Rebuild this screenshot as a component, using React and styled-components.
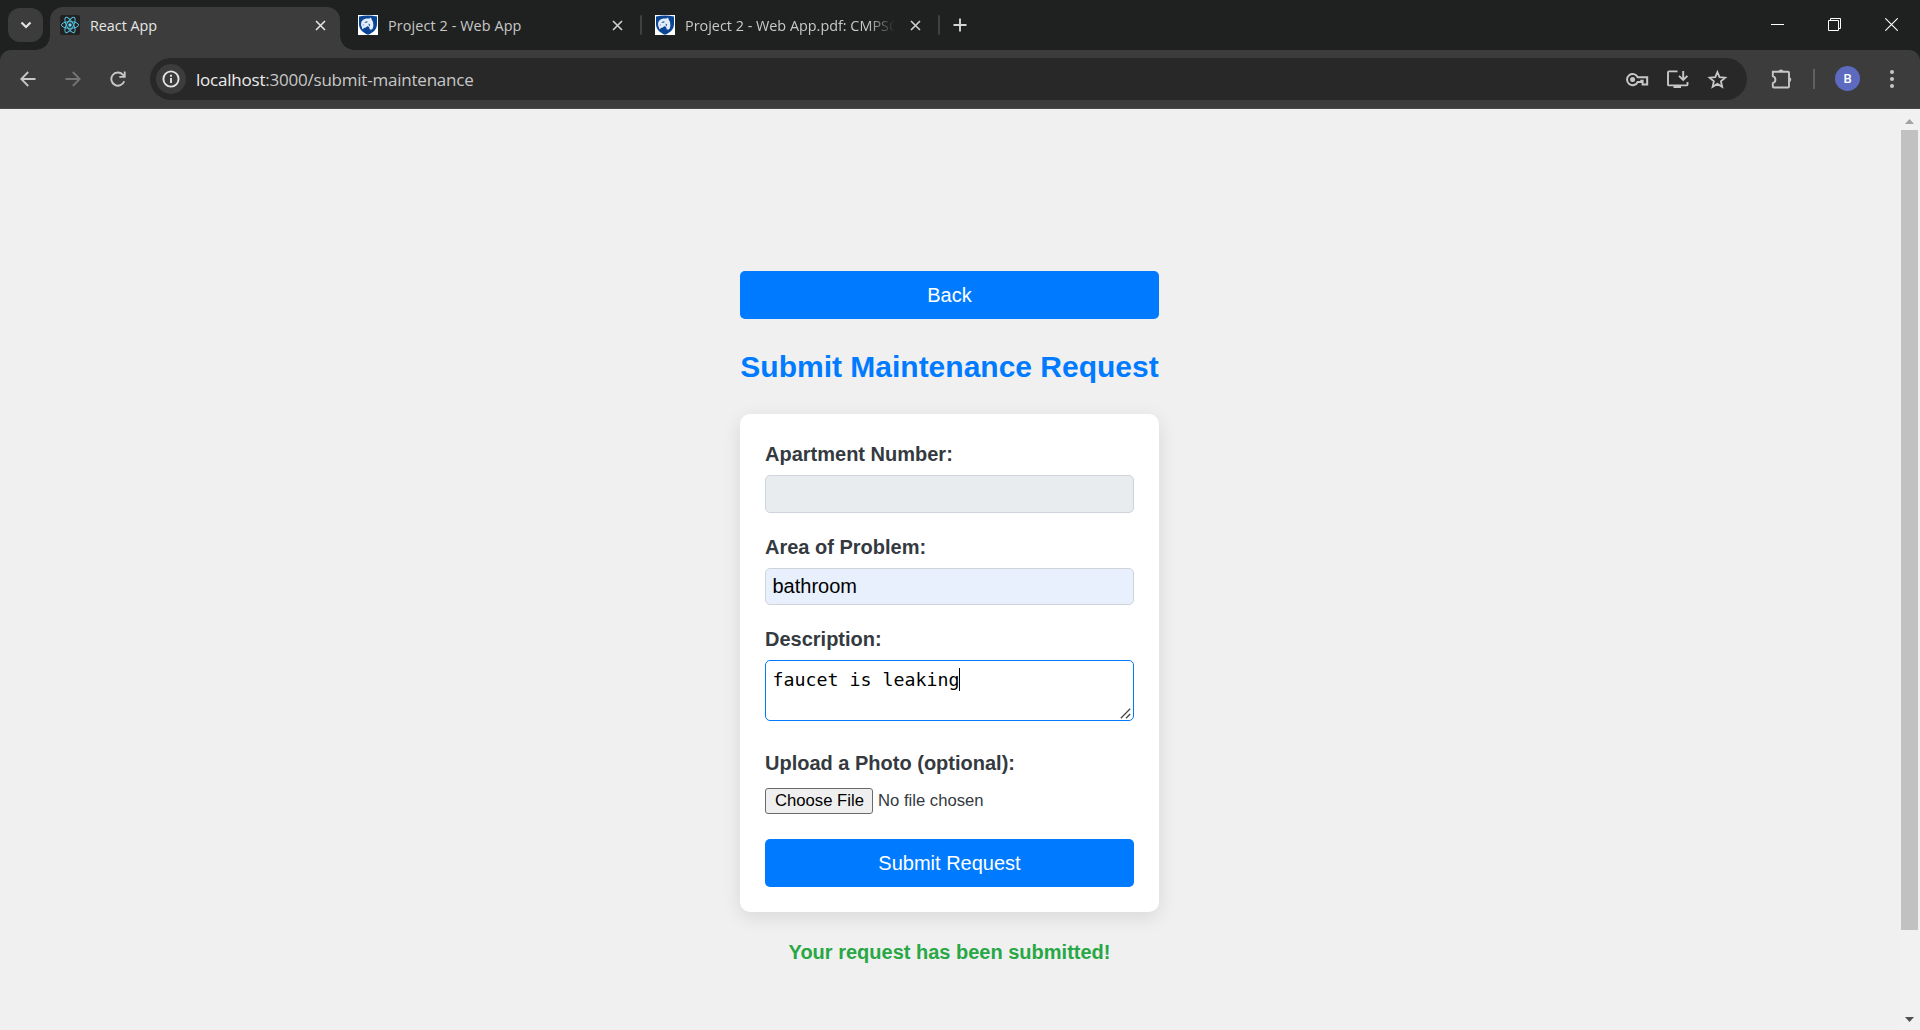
import React from "react";
import styled, { createGlobalStyle } from "styled-components";

const GlobalStyle = createGlobalStyle`
  * { box-sizing: border-box; }
  html, body { margin: 0; height: 100%; overflow: hidden; background: #f0f0f0; }
  #root { height: 100%; }
  button, input { margin: 0; }
`;

const ui = `"Open Sans", "Noto Sans", sans-serif`;
const arial = `"Liberation Sans", Arial, sans-serif`;

const Window = styled.div`
  display: flex;
  flex-direction: column;
  height: 100vh;
  font-family: ${arial};
`;

const TabStrip = styled.div`
  display: flex;
  align-items: flex-start;
  height: 50px;
  padding-left: 8px;
  background: #1f2120;
  flex: none;
`;

const TabSearch = styled.button`
  display: grid;
  place-items: center;
  width: 35px;
  height: 34px;
  margin: 8px 7px 0 0;
  padding: 0;
  border: 0;
  border-radius: 12px;
  background: #3c3c3c;
`;

const Tab = styled.div`
  position: relative;
  display: flex;
  align-items: center;
  width: ${(p) => p.$width}px;
  height: 43px;
  margin-top: 7px;
  padding: 0 ${(p) => p.$end}px 7px ${(p) => p.$start}px;
  border-radius: 13px 13px 0 0;
  background: ${(p) => (p.$active ? "#3c3c3c" : "transparent")};
  color: ${(p) => (p.$active ? "#e6e6e6" : "#c8c8c8")};
`;

const TabFoot = styled.span`
  position: absolute;
  bottom: 0;
  ${(p) => p.$side}: -14px;
  width: 14px;
  height: 14px;
  background: radial-gradient(
    circle at ${(p) => (p.$side === "left" ? "0 0" : "100% 0")},
    transparent 13.5px,
    #3c3c3c 14px
  );
`;

const TabTitle = styled.span`
  flex: 1;
  min-width: 0;
  margin: 1px 15px 0 10px;
  overflow: hidden;
  white-space: nowrap;
  font: 14.4px/22px ${ui};
  letter-spacing: ${(p) => p.$tracking}px;
  ${(p) => p.$fade && "mask-image: linear-gradient(to right, #000 87%, transparent 100%);"}
`;

const TabDivider = styled.i`
  width: 2px;
  height: 20px;
  margin-top: 15px;
  border-radius: 1px;
  background: #3f4140;
`;

const NewTab = styled.button`
  display: grid;
  place-items: center;
  width: 40px;
  height: 50px;
  padding: 0;
  border: 0;
  background: none;
`;

const WindowControls = styled.div`
  display: flex;
  margin-left: auto;
  height: 50px;
`;

const WindowButton = styled.button`
  display: grid;
  place-items: center;
  width: 57px;
  height: 49px;
  padding: 0;
  border: 0;
  background: none;
`;

const ToolbarBack = styled.div`
  background: #1f2120;
  flex: none;
`;

const Toolbar = styled.div`
  display: flex;
  align-items: center;
  height: 59px;
  padding: 0 14px 1px 14px;
  border-radius: 11px 11px 0 0;
  border-bottom: 1px solid #4a4848;
  background: #3c3c3c;
`;

const ToolButton = styled.button`
  display: grid;
  place-items: center;
  width: 28px;
  height: 28px;
  margin-left: ${(p) => p.$before || 0}px;
  margin-right: ${(p) => p.$gap || 0}px;
  padding: 0;
  border: 0;
  background: none;
`;

const AddressBar = styled.div`
  display: flex;
  align-items: center;
  flex: 1;
  height: 42px;
  padding: 0 16px 0 6px;
  border-radius: 21px;
  background: #282828;
`;

const SiteInfo = styled.span`
  display: grid;
  place-items: center;
  width: 30px;
  height: 30px;
  border-radius: 50%;
  background: #3c3c3c;
`;

const Url = styled.span`
  flex: 1;
  margin: 2px 0 0 10px;
  font: 17px/24px ${ui};
  letter-spacing: -0.22px;
  color: #c7c7c7;
  white-space: nowrap;
`;

const Host = styled.span`
  color: #ececec;
`;

const ToolDivider = styled.i`
  width: 2px;
  height: 20px;
  margin: 0 20px 0 18px;
  background: #606060;
`;

const Avatar = styled.span`
  display: grid;
  place-items: center;
  width: 25px;
  height: 25px;
  border-radius: 50%;
  background: #5c6bc0;
  color: #fff;
  font: 500 13px/25px Roboto, sans-serif;
`;

const Viewport = styled.div`
  display: flex;
  flex: 1;
  min-height: 0;
  background: #f0f0f0;
`;

const Page = styled.main`
  display: flex;
  flex-direction: column;
  align-items: center;
  flex: 1;
  padding-top: 162px;
  color: #343a40;
`;

const Content = styled.div`
  width: 419px;
`;

const PrimaryButton = styled.button`
  display: block;
  width: 100%;
  height: 48px;
  padding: 0;
  border: 0;
  border-radius: 5px;
  background: #007bff;
  color: #fff;
  font: 20px/48px ${arial};
`;

const Heading = styled.h2`
  margin: 25px 0;
  font-size: 30px;
  line-height: 45px;
  white-space: nowrap;
  text-align: center;
  color: #007bff;
`;

const Card = styled.form`
  padding: 25px;
  border-radius: 10px;
  background: #fff;
  box-shadow: 0 5px 19px rgba(0, 0, 0, 0.1);
`;

const Field = styled.div`
  margin-bottom: ${(p) => p.$after}px;
`;

const Label = styled.label`
  display: block;
  margin-bottom: ${(p) => p.$gap || 6}px;
  font-size: 20px;
  font-weight: bold;
  line-height: 30px;
`;

const Input = styled.input`
  display: block;
  width: 100%;
  height: ${(p) => p.$height}px;
  padding: 0 6.5px 1px;
  border: 1px solid #ced4da;
  border-radius: 5px;
  outline: 0;
  background: ${(p) => p.$fill};
  color: #000;
  font: 20px ${arial};
`;

const TextArea = styled.div`
  display: flex;
  align-items: flex-start;
  position: relative;
  height: 61px;
  padding: 7px 6.5px;
  border: 1px solid #007bff;
  border-radius: 5px;
  background: #fff;
  color: #000;
  font: 18.27px/24px "DejaVu Sans Mono", monospace;
`;

const Caret = styled.i`
  width: 1px;
  height: 23px;
  background: #000;
`;

const Grip = styled.svg`
  position: absolute;
  right: 2px;
  bottom: 1px;
`;

const FileRow = styled.div`
  display: flex;
  align-items: center;
  height: 26px;
  font-size: 16.67px;
`;

const FileButton = styled.button`
  width: 108px;
  height: 26px;
  margin-right: 5px;
  padding: 0 0 1px 1px;
  border: 1px solid #6b6b6b;
  border-radius: 3px;
  background: #efefef;
  color: #000;
  font: 16.67px ${arial};
`;

const Success = styled.p`
  margin: 25px 0 0;
  text-align: center;
  font-size: 20px;
  font-weight: bold;
  line-height: 30px;
  color: #28a745;
`;

const Scrollbar = styled.div`
  display: flex;
  flex-direction: column;
  align-items: center;
  width: 21px;
  padding: 10px 0 8px;
  background: #f1f1f1;
`;

const Thumb = styled.div`
  width: 17px;
  height: 800px;
  margin: 6px 0 auto;
  background: #c1c1c1;
`;

const ReactMark = () => (
  <svg width="20" height="20" viewBox="0 0 20 20">
    <rect width="20" height="20" rx="2" fill="#222" />
    <g fill="none" stroke="#53c1de" strokeWidth="1">
      <ellipse cx="10" cy="10" rx="8.6" ry="3.3" />
      <ellipse cx="10" cy="10" rx="8.6" ry="3.3" transform="rotate(60 10 10)" />
      <ellipse cx="10" cy="10" rx="8.6" ry="3.3" transform="rotate(120 10 10)" />
    </g>
    <circle cx="10" cy="10" r="1.7" fill="#61dafb" />
  </svg>
);

const LionShield = () => (
  <svg width="20" height="20" viewBox="0 0 20 20">
    <rect width="20" height="20" fill="#fff" />
    <path d="M1 1.400Q10-.4 19 1.400V9c0 5-3.500 8.500-9 10.800C4.500 17.500 1 14 1 9z" fill="#0a4595" />
    <path d="M3 10.200 3.300 7 5 4.700 8 3.400l3.300.1L13 2.600l.7 2L15 7l.4 3.400-.6 3-1.600 1.400-1.500-.6-.7-2.400-1.800-.6-1.400 1.400-2 .5-.9 1.400-.9-1.200-.3-1.600z" fill="#e4eef9" />
    <path d="m6 7.400 2.300-1.200 1.700.6-1.500 1.300zM10.500 8.600l1.700.6-.4 2.200-1.100-.9zM4.200 10.200l1.600-.9.2 1z" fill="#3d70b4" />
  </svg>
);

const CloseMark = ({ color }) => (
  <svg width="11" height="11" viewBox="0 0 11 11" stroke={color} strokeWidth="1.600">
    <path d="m1 1 9 9M10 1 1 10" />
  </svg>
);

const Line = ({ w = 24, h = 24, color = "#c7c7c7", width = 1.9, children }) => (
  <svg width={w} height={h} viewBox={`0 0 ${w} ${h}`} fill="none" stroke={color} strokeWidth={width}>
    {children}
  </svg>
);

export default function App() {
  return (
    <Window>
      <GlobalStyle />
      <TabStrip>
        <TabSearch aria-label="Search tabs">
          <Line w={12} h={8} color="#e3e3e3" width={2.2}>
            <path d="m1.500 1.500 4.500 4.500 4.500-4.500" />
          </Line>
        </TabSearch>
        <Tab $active $width={290} $start={10} $end={14}>
          <TabFoot $side="left" />
          <TabFoot $side="right" />
          <ReactMark />
          <TabTitle $tracking={-0.05}>React App</TabTitle>
          <CloseMark color="#e3e3e3" />
        </Tab>
        <Tab $width={300} $start={18} $end={17}>
          <LionShield />
          <TabTitle $tracking={0.1}>Project 2 - Web App</TabTitle>
          <CloseMark color="#d0d0d0" />
        </Tab>
        <TabDivider />
        <Tab $width={296} $start={13} $end={17}>
          <LionShield />
          <TabTitle $tracking={0} $fade>Project 2 - Web App.pdf: CMPSC</TabTitle>
          <CloseMark color="#d0d0d0" />
        </Tab>
        <TabDivider />
        <NewTab aria-label="New tab">
          <Line w={14} h={14} color="#d4d4d4"><path d="M7 .5v13M.5 7h13" /></Line>
        </NewTab>
        <WindowControls>
          <WindowButton aria-label="Minimize">
            <Line w={13} h={13} color="#fff" width={1}><path d="M0 6.500h13" /></Line>
          </WindowButton>
          <WindowButton aria-label="Restore">
            <Line w={13} h={13} color="#fff" width={1}><path d="M.5 2.500h10v10H.5zM2.500 2.500v-2h10v10h-2" /></Line>
          </WindowButton>
          <WindowButton aria-label="Close">
            <Line w={13} h={13} color="#fff" width={1.1}><path d="m.3.3 12.400 12.400M12.700.3.3 12.700" /></Line>
          </WindowButton>
        </WindowControls>
      </TabStrip>

      <ToolbarBack>
        <Toolbar>
          <ToolButton $gap={17} aria-label="Back">
            <Line w={16} h={16} width={1.8}><path d="M15.500 8H1.600M8.200 1 1.300 8l6.900 7" /></Line>
          </ToolButton>
          <ToolButton $gap={17} aria-label="Forward">
            <Line w={16} h={16} width={1.8} color="#757575"><path d="M.5 8h13.900M7.800 1l6.900 7-6.900 7" /></Line>
          </ToolButton>
          <ToolButton $gap={18} aria-label="Reload">
            <Line w={16} h={16}>
              <path d="M14.200 10.200A6.600 6.600 0 1 1 12.800 3.600L14.500 5.400" />
              <path d="M14.700.5v5.400H9.300" />
            </Line>
          </ToolButton>
          <AddressBar>
            <SiteInfo>
              <Line w={18} h={18} color="#e3e3e3">
                <circle cx="9" cy="9" r="7.600" />
                <path d="M9 8v5M9 4.800v2" />
              </Line>
            </SiteInfo>
            <Url><Host>localhost</Host>:3000/submit-maintenance</Url>
            <ToolButton $gap={12} aria-label="Passwords">
              <Line width={2}>
                <path d="M12.700 10.200A5.600 5.600 0 1 0 12.700 15H16.300V13.800H17.600V17.600H22.200V10.200z" />
                <circle cx="7.600" cy="12.500" r="2.500" fill="#c7c7c7" stroke="none" />
              </Line>
            </ToolButton>
            <ToolButton $gap={12} aria-label="Install app">
              <Line>
                <path d="M12.500 4.400H4Q3 4.400 3 5.400v12q0 1 1 1h17.500q1 0 1-1V15M8.500 20h7.500" />
                <path d="M18.200 4v8.500M14 8.800l4.200 4.200 4.200-4.200" />
              </Line>
            </ToolButton>
            <ToolButton aria-label="Bookmark">
              <Line width={1.800}>
                <path d="m12.400 5 2.100 5.100 5.700.5-4.300 3.700 1.300 5.500-4.800-2.900-4.800 2.900 1.300-5.500-4.300-3.700 5.700-.5z" />
              </Line>
            </ToolButton>
          </AddressBar>
          <ToolButton $before={20} aria-label="Extensions">
            <Line>
              <path d="M3.800 4.800H19q1 0 1 1v13.700q0 1-1 1H4.800q-1 0-1-1v-3.400q2.600-.8 2.600-3.300T3.800 9.200z" />
              <path d="M9.300 4.500a2.800 2.800 0 0 1 5.400 0zM20.300 10a2.700 2.700 0 0 1 0 5.200z" fill="#c7c7c7" stroke="none" />
            </Line>
          </ToolButton>
          <ToolDivider />
          <Avatar>B</Avatar>
          <ToolButton $before={18} aria-label="Menu">
            <svg width="4" height="18" fill="#c7c7c7">
              <circle cx="2" cy="2" r="2" /><circle cx="2" cy="9" r="2" /><circle cx="2" cy="16" r="2" />
            </svg>
          </ToolButton>
        </Toolbar>
      </ToolbarBack>

      <Viewport>
        <Page>
          <Content>
            <PrimaryButton>Back</PrimaryButton>
            <Heading>Submit Maintenance Request</Heading>
            <Card onSubmit={(e) => e.preventDefault()}>
              <Field $after={19}>
                <Label>Apartment Number:</Label>
                <Input $height={38} $fill="#e9ecef" readOnly />
              </Field>
              <Field $after={19}>
                <Label>Area of Problem:</Label>
                <Input $height={37} $fill="#e8f0fe" defaultValue="bathroom" />
              </Field>
              <Field $after={27}>
                <Label>Description:</Label>
                <TextArea>
                  faucet is leaking
                  <Caret />
                  <Grip width="11" height="11" stroke="#444" strokeWidth="1.300">
                    <path d="M.8 10.200 10.200.8M6 10.200 10.200 6" />
                  </Grip>
                </TextArea>
              </Field>
              <Field $after={25}>
                <Label $gap={10}>Upload a Photo (optional):</Label>
                <FileRow>
                  <FileButton type="button">Choose File</FileButton>
                  No file chosen
                </FileRow>
              </Field>
              <PrimaryButton>Submit Request</PrimaryButton>
            </Card>
            <Success>Your request has been submitted!</Success>
          </Content>
        </Page>
        <Scrollbar>
          <svg width="9" height="5"><path d="M4.500 0 9 5H0z" fill="#a3a3a3" /></svg>
          <Thumb />
          <svg width="9" height="5"><path d="M0 0h9L4.500 5z" fill="#505050" /></svg>
        </Scrollbar>
      </Viewport>
    </Window>
  );
}
